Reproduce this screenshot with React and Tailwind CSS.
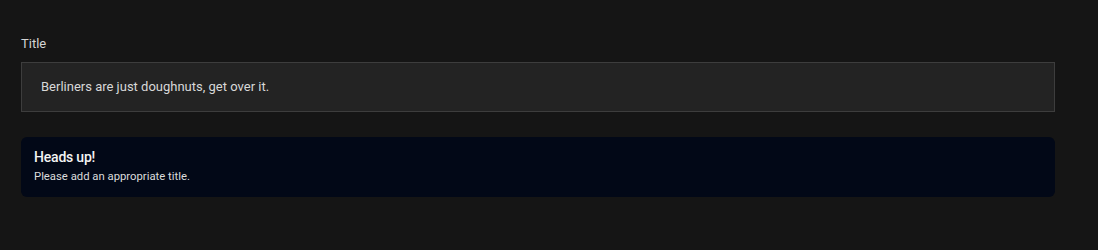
export default function App() {
  return (
    <div className="min-h-[250px] w-full bg-[#151515] pl-[21px] pr-[43px] pt-[36px] font-['Roboto',sans-serif]">
      <label className="block text-[13px] leading-[16px] text-[#d4d4d4]">Title</label>
      <div className="mt-[10px] flex h-[50px] items-center border border-[#3d3d3d] bg-[#232323] px-[19px] text-[13px] text-[#d8d8d8]">
        Berliners are just doughnuts, get over it.
      </div>
      <div className="mt-[25px] rounded-md bg-[#020817] px-[13px] pt-[10px] pb-[11px]">
        <div className="text-[14px] font-medium leading-[20px] tracking-[-0.2px] text-[#f4f4f4]">Heads up!</div>
        <div className="text-[11.3px] leading-[19px] text-[#dcdcdc]">Please add an appropriate title.</div>
      </div>
    </div>
  );
}
